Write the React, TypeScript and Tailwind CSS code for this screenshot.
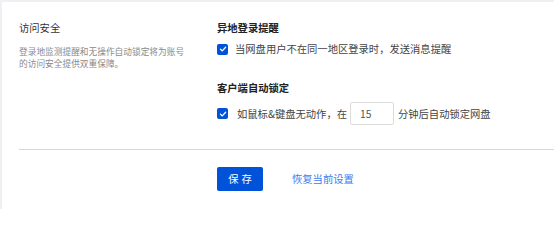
import React from "react"

const font = { fontFamily: '"Noto Sans CJK SC", "Noto Sans", sans-serif' }

function Check() {
  return (
    <span className="flex h-[11px] w-[11px] shrink-0 items-center justify-center rounded-[2px] bg-[#0052d9]">
      <svg width="8" height="8" viewBox="0 0 10 10" fill="none">
        <path d="M1.8 5.2 L4.1 7.4 L8.3 2.8" stroke="white" strokeWidth="1.6" strokeLinecap="round" strokeLinejoin="round" />
      </svg>
    </span>
  )
}

export default function App() {
  return (
    <div
      className="h-[209px] w-[554px] overflow-hidden border-l-2 border-t-2 border-[#eef0f4] bg-white"
      style={font}
    >
      {/* Settings row */}
      <div className="flex pl-[17px] pt-[18px]">
        <div className="w-[198px] shrink-0">
          <div className="text-[10.3px] leading-[16px] text-[#333]">访问安全</div>
          <p className="mt-[10px] w-[172px] text-[8.7px] leading-[12px] text-[#8a8a8a]">
            登录地监测提醒和无操作自动锁定将为账号的访问安全提供双重保障。
          </p>
        </div>

        <div className="flex flex-col">
          <div className="text-[10.3px] font-bold leading-[16px] text-[#222]">异地登录提醒</div>
          <label className="mt-[5px] flex h-[16px] items-center gap-[7px] text-[10.3px] text-[#444]">
            <Check />
            <span>当网盘用户不在同一地区登录时，发送消息提醒</span>
          </label>

          <div className="mt-[23px] text-[10.3px] font-bold leading-[16px] text-[#222]">客户端自动锁定</div>
          <label className="mt-[6px] flex h-[23px] items-center text-[10.3px] text-[#444]">
            <Check />
            <span className="ml-[9px]">如鼠标&amp;键盘无动作，在</span>
            <span className="mx-[3px] flex h-[23px] w-[44px] items-center rounded-[2px] border border-[#dcdcdc] pl-[9px] text-[#555]">
              15
            </span>
            <span className="ml-[1px]">分钟后自动锁定网盘</span>
          </label>
        </div>
      </div>

      {/* Divider + actions */}
      <div className="ml-[17px] mt-[24px] h-px bg-[#d8d9df]" />
      <div className="ml-[215px] mt-[17px] flex items-center">
        <button className="h-[24px] w-[46px] rounded-[2px] bg-[#0052d9] pl-[3px] text-[10.3px] tracking-[3px] text-white">
          保存
        </button>
        <a className="ml-[29px] text-[10.3px] text-[#3b7cf0]">恢复当前设置</a>
      </div>
    </div>
  )
}
